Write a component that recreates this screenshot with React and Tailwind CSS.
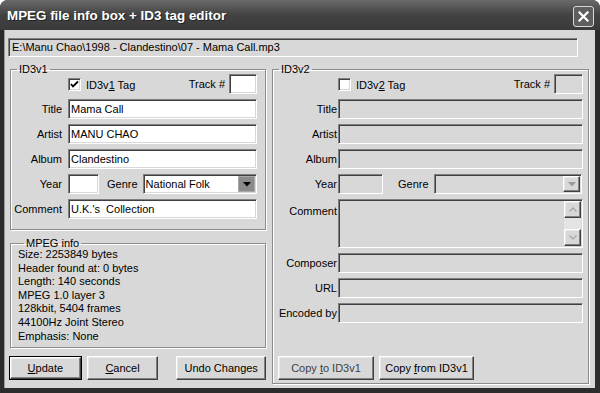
import React from 'react'

const sunken = 'border border-[#808080] border-r-white border-b-white shadow-[inset_1px_1px_0_#404040,inset_-1px_-1px_0_#d8d8d8]'
const raised = 'border border-white border-r-[#404040] border-b-[#404040] shadow-[inset_-1px_-1px_0_#808080,inset_1px_1px_0_#e8e8e8]'
const groupBox = 'border border-[#8c8c8c] shadow-[inset_1px_1px_0_#fff,1px_1px_0_#fff] min-w-0'

function Field({ value, disabled, className = '' }) {
  return (
    <div className={`${sunken} h-[20px] flex items-center pl-[2px] overflow-hidden whitespace-nowrap ${disabled ? 'bg-[#d8d8d8]' : 'bg-white'} ${className}`}>
      {value}
    </div>
  )
}

function Row({ label, labelW, gap, children, className = '' }) {
  return (
    <div className={`flex items-center ${className}`}>
      <div className="text-right shrink-0" style={{ width: labelW, marginRight: gap }}>{label}</div>
      <div className="flex-1 flex items-center min-w-0">{children}</div>
    </div>
  )
}

function CheckBox({ checked }) {
  return (
    <div className={`${sunken} w-[13px] h-[13px] bg-white flex items-center justify-center shrink-0`}>
      {checked && (
        <svg width="9" height="9" viewBox="0 0 9 9">
          <path d="M1 4 L3 6.5 L8 1.5" stroke="#000" strokeWidth="1.8" fill="none" />
        </svg>
      )}
    </div>
  )
}

function Combo({ value, disabled, className = '' }) {
  return (
    <div className={`${sunken} h-[20px] flex items-center ${disabled ? 'bg-[#d8d8d8]' : 'bg-white'} ${className}`}>
      <div className="flex-1 pl-[2px] whitespace-nowrap overflow-hidden">{value}</div>
      <div className={`w-[17px] h-[16px] mr-[1px] flex items-center justify-center ${disabled ? `${raised} bg-[#d8d8d8]` : 'bg-[#8a8a8a] border border-[#a8a8a8]'}`}>
        <svg width="8" height="5" viewBox="0 0 8 5">
          <path d="M0 0 H8 L4 4.5 Z" fill={disabled ? '#9a9a9a' : '#000'} />
        </svg>
      </div>
    </div>
  )
}

function Button({ children, def, disabled, className = '' }) {
  const inner = (
    <div className={`${raised} bg-[#d8d8d8] h-full flex items-center justify-center whitespace-nowrap ${disabled ? 'text-[#404040]' : 'text-black'}`}>
      {children}
    </div>
  )
  if (def) {
    return <div className={`border border-black h-[24px] ${className}`}>{inner}</div>
  }
  return <div className={`h-[24px] ${className}`}>{inner}</div>
}

function Legend({ children }) {
  return <legend className="ml-[6px] px-[2px] leading-[10px]">{children}</legend>
}

const mpegInfo = [
  'Size: 2253849 bytes',
  'Header found at: 0 bytes',
  'Length: 140 seconds',
  'MPEG 1.0 layer 3',
  '128kbit, 5404 frames',
  '44100Hz Joint Stereo',
  'Emphasis: None',
]

export default function App() {
  return (
    <div className="w-[600px] h-[393px] bg-white font-['Liberation_Sans',Arial,sans-serif] text-[11px] text-black">
      <div className="w-full h-full flex flex-col bg-[#2c2c2c] rounded-t-[8px] overflow-hidden">
        {/* Title bar */}
        <div className="h-[30px] shrink-0 flex items-center pl-[7px] pr-[6px] pt-[3px] bg-linear-to-b from-[#6a6a6a] via-[#424242] to-[#3a3a3a]">
          <span className="text-white font-bold text-[13.4px] [text-shadow:1px_1px_0_#222]">MPEG file info box + ID3 tag editor</span>
          <div className="ml-auto w-[21px] h-[21px] rounded-[3px] border border-[#d8d8d8] bg-[#5e5e5e] flex items-center justify-center">
            <svg width="11" height="11" viewBox="0 0 11 11">
              <path d="M1.5 1.5 L9.5 9.5 M9.5 1.5 L1.5 9.5" stroke="#fff" strokeWidth="2.2" strokeLinecap="square" />
            </svg>
          </div>
        </div>

        {/* Client area */}
        <div className="flex-1 ml-[4px] mr-[5px] mb-[5px] bg-[#d8d8d8] flex flex-col px-[3px] pt-[8px] border-l border-[#9a9a9a]">
          <div className={`${sunken} w-[570px] h-[19px] bg-[#d8d8d8] flex items-center pl-[3px] whitespace-nowrap`}>
            E:\Manu Chao\1998 - Clandestino\07 - Mama Call.mp3
          </div>

          <div className="flex mt-[7px] gap-[6px] ml-[2px]">
            {/* Left column */}
            <div className="w-[256px] flex flex-col">
              <fieldset className={`${groupBox} pr-[8px] pb-[10px]`}>
                <Legend>ID3v1</Legend>
                <div className="flex flex-col gap-[5px]">
                  <div className="flex items-end h-[20px]">
                    <div className="w-[57px]" />
                    <div className="flex items-center gap-[5px] mb-[1px]">
                      <CheckBox checked />
                      <span>ID3v<span className="underline">1</span> Tag</span>
                    </div>
                    <span className="ml-auto self-center mr-[4px]">Track #</span>
                    <Field className="w-[28px]" />
                  </div>
                  <Row label="Title" labelW={51} gap={6}><Field value="Mama Call" className="flex-1" /></Row>
                  <Row label="Artist" labelW={51} gap={6}><Field value="MANU CHAO" className="flex-1" /></Row>
                  <Row label="Album" labelW={51} gap={6}><Field value="Clandestino" className="flex-1" /></Row>
                  <Row label="Year" labelW={51} gap={6}>
                    <Field className="w-[31px]" />
                    <span className="ml-[8px] mr-[5px]">Genre</span>
                    <Combo value="National Folk" className="flex-1" />
                  </Row>
                  <Row label="Comment" labelW={51} gap={6}><Field value="U.K.'s  Collection" className="flex-1 whitespace-pre" /></Row>
                </div>
              </fieldset>

              <fieldset className={`${groupBox} mt-[8px] pb-[4px] pl-[7px]`}>
                <Legend>MPEG info</Legend>
                <div className="leading-[13.6px]">
                  {mpegInfo.map(l => <div key={l}>{l}</div>)}
                </div>
              </fieldset>

              <div className="flex mt-[8px] -ml-[1px]">
                <Button def className="w-[73px]"><span><span className="underline">U</span>pdate</span></Button>
                <Button className="w-[72px] ml-[5px]"><span><span className="underline">C</span>ancel</span></Button>
                <Button className="w-[90px] ml-[18px]">Undo Changes</Button>
              </div>
            </div>

            {/* Right column */}
            <fieldset className={`${groupBox} w-[317px] pr-[5px] pb-[3px]`}>
              <Legend>ID3v2</Legend>
              <div className="flex flex-col gap-[5px]">
                <div className="flex items-end h-[20px]">
                  <div className="w-[65px]" />
                  <div className="flex items-center gap-[5px] mb-[1px]">
                    <CheckBox />
                    <span>ID3v<span className="underline">2</span> Tag</span>
                  </div>
                  <span className="ml-auto self-center mr-[4px]">Track #</span>
                  <Field disabled className="w-[29px]" />
                </div>
                <Row label="Title" labelW={64} gap={1}><Field disabled className="flex-1" /></Row>
                <Row label="Artist" labelW={64} gap={1}><Field disabled className="flex-1" /></Row>
                <Row label="Album" labelW={64} gap={1}><Field disabled className="flex-1" /></Row>
                <Row label="Year" labelW={64} gap={1}>
                  <Field disabled className="w-[45px]" />
                  <span className="ml-[15px] mr-[5px]">Genre</span>
                  <Combo disabled className="flex-1 mr-[1px]" />
                </Row>
                <div className="flex items-start">
                  <div className="w-[64px] mr-[1px] text-right mt-[4px]">Comment</div>
                  <div className={`${sunken} flex-1 h-[49px] bg-[#d8d8d8] flex justify-end p-[1px]`}>
                    <div className="w-[17px] h-full bg-[#e4e4e4] flex flex-col justify-between">
                      <div className={`${raised} h-[17px] bg-[#d8d8d8] flex items-center justify-center`}>
                        <svg width="8" height="5" viewBox="0 0 8 5"><path d="M0.5 4.5 L4 1 L7.5 4.5" stroke="#a8a8a8" strokeWidth="1.4" fill="none" /></svg>
                      </div>
                      <div className={`${raised} h-[17px] bg-[#d8d8d8] flex items-center justify-center`}>
                        <svg width="8" height="5" viewBox="0 0 8 5"><path d="M0.5 0.5 L4 4 L7.5 0.5" stroke="#a8a8a8" strokeWidth="1.4" fill="none" /></svg>
                      </div>
                    </div>
                  </div>
                </div>
                <Row label="Composer" labelW={64} gap={1}><Field disabled className="flex-1" /></Row>
                <Row label="URL" labelW={64} gap={1}><Field disabled className="flex-1" /></Row>
                <Row label="Encoded by" labelW={64} gap={1}><Field disabled className="flex-1" /></Row>
              </div>
              <div className="flex mt-[33px] ml-[5px]">
                <Button disabled className="w-[96px]"><span>Copy <span className="underline">t</span>o ID3v1</span></Button>
                <Button className="w-[95px] ml-[5px]"><span>Copy <span className="underline">f</span>rom ID3v1</span></Button>
              </div>
            </fieldset>
          </div>
        </div>
      </div>
    </div>
  )
}
